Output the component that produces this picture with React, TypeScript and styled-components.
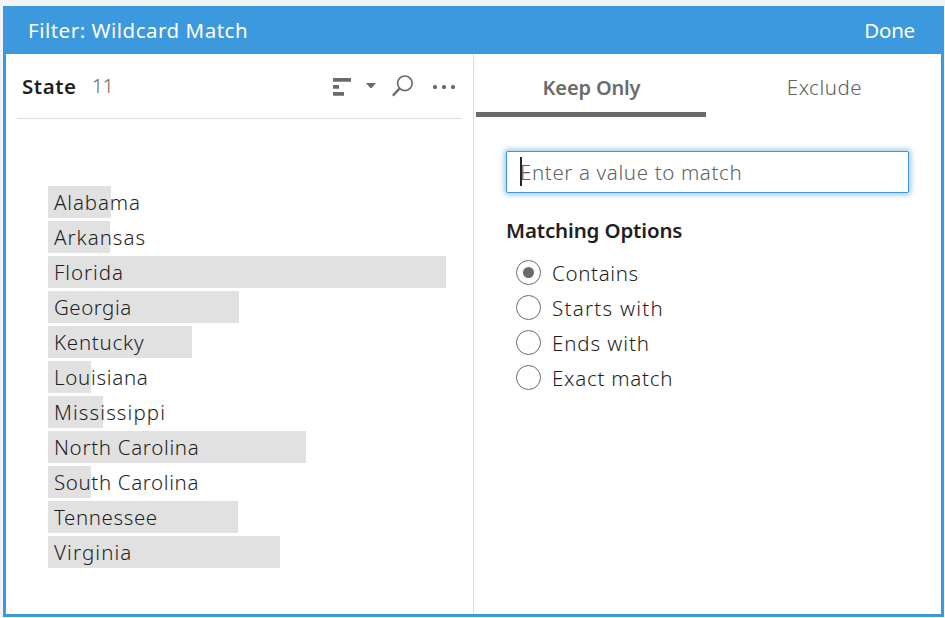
import React, { useState } from "react";
import styled, { createGlobalStyle } from "styled-components";

const GlobalStyle = createGlobalStyle`
  *, *::before, *::after { box-sizing: border-box; }
  body {
    margin: 0;
    background: #f3f4f6;
    color: #1f1f1f;
    font-family: "Noto Sans", "Open Sans", sans-serif;
    font-size: 20.5px;
    font-weight: 350;
  }
`;

const Page = styled.main`
  height: 618px;
  padding: 6px 1px 1px 3px;
  overflow: hidden;
`;

const Dialog = styled.section`
  display: flex;
  flex-direction: column;
  height: 611px;
  border: 3px solid #3c99de;
  border-top: 0;
  background: #fff;
`;

const TitleBar = styled.header`
  display: flex;
  flex: none;
  justify-content: space-between;
  align-items: center;
  height: 48px;
  padding: 0 26px 0 22px;
  background: #3c99de;
  color: #fff;
  font-weight: 400;
  line-height: 48px;
`;

/* Text with per-label letter spacing. */
const Label = styled.span<{ $track?: number }>`
  letter-spacing: ${(p) => p.$track ?? 0}px;
  white-space: nowrap;
`;

const TitleButton = styled.button`
  padding: 0;
  border: 0;
  background: none;
  color: inherit;
  font: inherit;
  letter-spacing: -0.2px;
`;

const Body = styled.div`
  display: flex;
  flex: 1;
  min-height: 0;
`;

const MembersPane = styled.div`
  flex: none;
  width: 468px;
  padding: 0 11px;
  border-right: 1px solid #dcdcdc;
`;

const FieldHeader = styled.div`
  display: flex;
  align-items: center;
  height: 65px;
  padding: 0 7px 0 5px;
  border-bottom: 1px solid #dcdcdc;
  line-height: 64px;
`;

const FieldName = styled.strong`
  margin-top: -1px;
  font-weight: 650;
  letter-spacing: 0.55px;
`;

const Count = styled.span`
  margin: -1px 0 0 15px;
  color: #6b6b6b;
  font-size: 20px;
  font-weight: 300;
  letter-spacing: -0.6px;
`;

const Tools = styled.div`
  display: flex;
  align-items: center;
  margin-left: auto;
  padding-top: 1px;
  color: #6b6b6b;

  svg { display: block; }
`;

const SortIcon = styled.svg`
  margin-right: 15px;
`;

const ArrowIcon = styled.svg`
  margin: -3px 16px 0 0;
`;

const SearchIcon = styled.svg`
  margin: -2px 19px 0 0;
`;

const Members = styled.ul`
  display: flex;
  flex-direction: column;
  gap: 3px;
  margin: 67px 0 0 31px;
  padding: 0;
  list-style: none;
`;

const Member = styled.li<{ $bar: number }>`
  height: 32px;
  padding-left: 6px;
  background: linear-gradient(#e1e1e1, #e1e1e1) 0 0 / ${(p) => p.$bar}px 100% no-repeat;
  line-height: 32px;
`;

const OptionsPane = styled.div`
  flex: 1;
`;

const Tabs = styled.div`
  display: flex;
  padding-left: 2px;
`;

const Tab = styled.button<{ $active: boolean }>`
  flex: ${(p) => (p.$active ? "0 0 230px" : "1")};
  height: 63px;
  padding: ${(p) => (p.$active ? "9px 0 0 1px" : "7px 0 0 2px")};
  border: 0;
  border-bottom: 5px solid ${(p) => (p.$active ? "#6b6b6b" : "transparent")};
  background: none;
  color: ${(p) => (p.$active ? "#6b6b6b" : "#616161")};
  font-family: inherit;
  font-size: ${(p) => (p.$active ? 20 : 20.5)}px;
  font-weight: ${(p) => (p.$active ? 600 : 350)};
  line-height: 50px;
`;

const MatchForm = styled.form`
  padding: 34px 32px 0 32px;
`;

const InputFrame = styled.div`
  position: relative;
`;

const ValueInput = styled.input`
  display: block;
  width: 100%;
  height: 42px;
  padding: 0 13px;
  border: 1px solid #3c99de;
  border-radius: 2px;
  outline: none;
  box-shadow: 0 0 5px 2px rgba(60, 153, 222, 0.5);
  background: #fff;
  color: #262626;
  caret-color: transparent;
  font: inherit;
  letter-spacing: 0.63px;

  &::placeholder { color: #616161; opacity: 1; }
`;

const Cursor = styled.i`
  position: absolute;
  top: 6px;
  left: 14px;
  width: 2px;
  height: 29px;
  background: #262626;
`;

const OptionsTitle = styled.h2`
  margin: 23px 0 11px;
  font-size: 20.5px;
  font-weight: 600;
  letter-spacing: -0.15px;
  line-height: 28px;
`;

const Option = styled.label`
  display: flex;
  align-items: center;
  gap: 11px;
  height: 35px;
  padding-left: 10px;
  line-height: 33px;

  span { padding-top: 2px; }
`;

const Radio = styled.input`
  display: grid;
  place-items: center;
  width: 25px;
  height: 25px;
  margin: 0;
  border: 1px solid #6b6b6b;
  border-radius: 50%;
  appearance: none;

  &:checked::after {
    content: "";
    width: 11px;
    height: 11px;
    border-radius: 50%;
    background: #6b6b6b;
  }
`;

const members = [
  { name: "Alabama", bar: 63, track: 0.85 },
  { name: "Arkansas", bar: 62, track: 1 },
  { name: "Florida", bar: 398, track: 0.95 },
  { name: "Georgia", bar: 191, track: 0.5 },
  { name: "Kentucky", bar: 144, track: 0.75 },
  { name: "Louisiana", bar: 43, track: 0.7 },
  { name: "Mississippi", bar: 55, track: 1.1 },
  { name: "North Carolina", bar: 258, track: 0.68 },
  { name: "South Carolina", bar: 43, track: 0.62 },
  { name: "Tennessee", bar: 190, track: 0.6 },
  { name: "Virginia", bar: 232, track: 1.1 },
];

const options = [
  { name: "Contains", track: 0.65 },
  { name: "Starts with", track: 1.25 },
  { name: "Ends with", track: 0.9 },
  { name: "Exact match", track: 0.75 },
];

export default function App() {
  const [mode, setMode] = useState("Contains");

  return (
    <Page>
      <GlobalStyle />
      <Dialog>
        <TitleBar>
          <Label $track={0.5}>Filter: Wildcard Match</Label>
          <TitleButton>Done</TitleButton>
        </TitleBar>
        <Body>
          <MembersPane>
            <FieldHeader>
              <FieldName>State</FieldName>
              <Count>11</Count>
              <Tools>
                <SortIcon width="18" height="18" viewBox="0 0 18 18" fill="currentColor">
                  <path d="M0 0h18v3.7H0zM0 7h6v3.7H0zM0 14h11v3.7H0z" />
                </SortIcon>
                <ArrowIcon width="10" height="5" viewBox="0 0 10 5" fill="currentColor">
                  <path d="M.5 0h9v.8L5.6 5H4.4L.5.8z" />
                </ArrowIcon>
                <SearchIcon width="22" height="22" viewBox="0 0 22 22" fill="none" stroke="currentColor">
                  <circle cx="12.9" cy="8.3" r="7.3" strokeWidth="1.7" />
                  <path d="M7.8 13.4L.8 20.6" strokeWidth="2.3" />
                </SearchIcon>
                <svg width="22" height="4" viewBox="0 0 22 4" fill="currentColor">
                  <rect x="0" y="0" width="4" height="4" rx="1.5" />
                  <rect x="9" y="0" width="4" height="4" rx="1.5" />
                  <rect x="18" y="0" width="4" height="4" rx="1.5" />
                </svg>
              </Tools>
            </FieldHeader>
            <Members>
              {members.map((m) => (
                <Member key={m.name} $bar={m.bar}>
                  <Label $track={m.track}>{m.name}</Label>
                </Member>
              ))}
            </Members>
          </MembersPane>
          <OptionsPane>
            <Tabs>
              <Tab $active>
                <Label $track={-0.15}>Keep Only</Label>
              </Tab>
              <Tab $active={false}>
                <Label $track={0.55}>Exclude</Label>
              </Tab>
            </Tabs>
            <MatchForm>
              <InputFrame>
                <ValueInput placeholder="Enter a value to match" />
                <Cursor />
              </InputFrame>
              <OptionsTitle>Matching Options</OptionsTitle>
              {options.map((o) => (
                <Option key={o.name}>
                  <Radio
                    type="radio"
                    name="mode"
                    checked={mode === o.name}
                    onChange={() => setMode(o.name)}
                  />
                  <Label $track={o.track}>{o.name}</Label>
                </Option>
              ))}
            </MatchForm>
          </OptionsPane>
        </Body>
      </Dialog>
    </Page>
  );
}
